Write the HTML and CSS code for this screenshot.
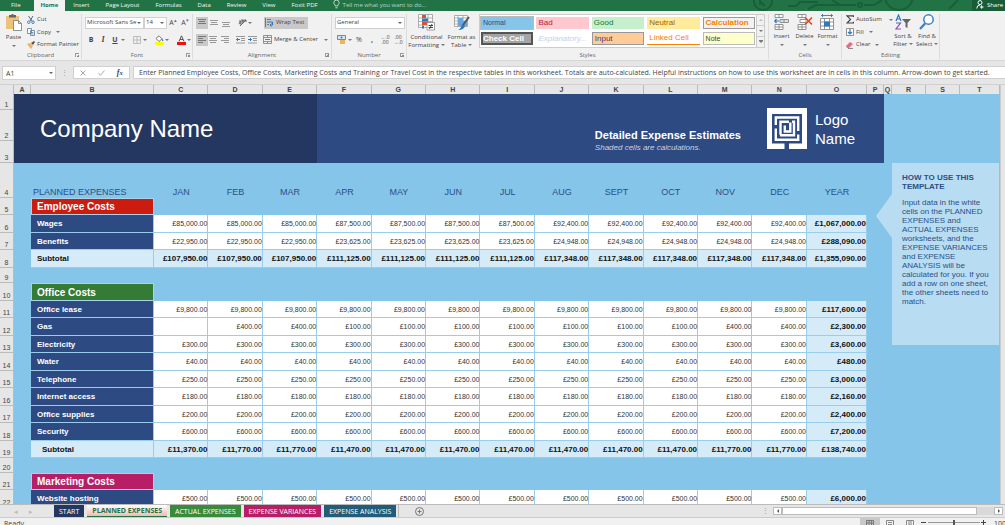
FILE: index.html
```
<!DOCTYPE html>
<html lang="en">
<head>
    <meta charset="UTF-8">
    <title>Planned Expenses</title>
    <link rel="stylesheet" href="styles.css">
</head>
<body>
<div class="app">
    <!-- ribbon tabs -->
    <nav class="tabs">
        <a href="#" class="tab tab-file">File</a>
        <a href="#" class="tab active">Home</a>
        <a href="#" class="tab">Insert</a>
        <a href="#" class="tab">Page Layout</a>
        <a href="#" class="tab">Formulas</a>
        <a href="#" class="tab">Data</a>
        <a href="#" class="tab">Review</a>
        <a href="#" class="tab">View</a>
        <a href="#" class="tab">Foxit PDF</a>
        <a href="#" class="tell-me">
            <svg width="7" height="9" viewBox="0 0 7 9" fill="none" stroke="#b9d6c5"><path d="M2.2 6V5Q.8 4 .8 2.8A2.6 2.6 0 0 1 6.2 2.8Q6.2 4 4.8 5V6zM2.4 7.8h2.2"/></svg>
            Tell me what you want to do...</a>
        <svg class="circuit" width="220" height="11" viewBox="0 0 220 11" fill="none" stroke="#1a5f39" stroke-width="2"><circle cx="11" cy="1" r="9"/><path d="M8-1v6M8 1l5 5M36 6h8l4-4h18M56 9l8-4h40M80 0l8 5M112 5h10l8-5M206 0l-9 9"/><circle cx="108" cy="5" r="2"/><circle cx="147" cy="-4" r="14"/></svg>
        <button class="share">
            <svg width="8" height="9" viewBox="0 0 8 9" fill="none" stroke="#fff"><circle cx="4" cy="2.6" r="2"/><path d="M.7 8.5Q1 5 4 5M4 7h3.5M5.7 5.3v3.4"/></svg>
            Share</button>
    </nav>

    <!-- ribbon -->
    <div class="ribbon">
        <section class="group clipboard">
            <div class="group-body">
                <button class="big paste">
                    <svg width="16" height="17" viewBox="0 0 16 17"><path fill="#edc27a" d="M0 2h13v13H0z"/><path fill="#666" d="M3 1h2q1.500-2 3 0h2v2.500H3z"/><path fill="#fff" stroke="#777" stroke-width=".8" d="M7.500 6.500h5l3 3v7h-8zM12.500 6.500v3h3"/></svg>
                    <span>Paste</span><i class="arrow"></i>
                </button>
                <div class="stack">
                    <button class="small"><svg width="8" height="8" viewBox="0 0 8 8" fill="none" stroke="#4a5a70" stroke-width=".9"><path d="M1.500 0L5 5M6 0L3 5"/><circle cx="1.800" cy="6.200" r="1.300" stroke="#2f78bd"/><circle cx="6" cy="6.200" r="1.300" stroke="#2f78bd"/></svg>Cut</button>
                    <button class="small"><svg width="8" height="8" viewBox="0 0 8 8" fill="#fff" stroke="#5b7899" stroke-width=".8"><path d="M.5.5h4v5h-4zM3.500 2.500h4v5h-4zM4.500 4.500h2M4.500 6h2"/></svg>Copy<i class="arrow"></i></button>
                    <button class="small"><svg width="8" height="8" viewBox="0 0 8 8"><path fill="#edb45c" d="M0 3l3-1 3 3-2 3z"/><path fill="#555" d="M4 2l3-2 1 1-2 3z"/></svg>Format Painter</button>
                </div>
            </div>
            <h2>Clipboard</h2><i class="launcher"></i>
        </section>

        <section class="group font">
            <div class="group-body rows">
                <div class="row">
                    <span class="combo font-name"><select aria-label="Font"><option>Microsoft Sans Se</option></select></span>
                    <span class="combo font-size"><select aria-label="Font size"><option>14</option></select></span>
                    <button class="tool letter">A<sup>▴</sup></button>
                    <button class="tool letter">A<sup>▾</sup></button>
                </div>
                <div class="row">
                    <button class="tool"><b>B</b></button>
                    <button class="tool"><i class="serif">I</i></button>
                    <button class="tool"><u><b>U</b></u></button>
                    <i class="arrow"></i>
                    <button class="tool split"><svg width="8" height="8" viewBox="0 0 8 8" fill="none" stroke="#bbb"><path d="M.5.5h7v7h-7zM4 0v8M0 4h8"/></svg></button>
                    <i class="arrow"></i>
                    <button class="tool split"><svg width="9" height="10" viewBox="0 0 9 10"><path fill="#fff" stroke="#555" stroke-width=".8" d="M1 3.500L4 .8l3 3-3 2.700z"/><path fill="#2f78bd" d="M7 3l1.500 3H7z"/><path fill="#ff0" d="M0 7h9v3H0z"/></svg></button>
                    <i class="arrow"></i>
                    <button class="tool split"><svg width="9" height="10" viewBox="0 0 9 10"><path fill="none" stroke="#555" d="M2 6.500L4.500.8 7 6.500M3 4.500h3"/><path fill="#e11" d="M0 7h9v3H0z"/></svg></button>
                    <i class="arrow"></i>
                </div>
            </div>
            <h2>Font</h2><i class="launcher"></i>
        </section>

        <section class="group alignment">
            <div class="group-body rows">
                <div class="row">
                    <button class="tool box on"><svg width="8" height="8" viewBox="0 0 8 8" stroke="#777"><path d="M0 .5h8M1 2.500h6M0 4.500h8"/></svg></button>
                    <button class="tool box"><svg width="8" height="8" viewBox="0 0 8 8" stroke="#999"><path d="M0 1.500h8M1 3.500h6M0 5.500h8"/></svg></button>
                    <button class="tool box"><svg width="8" height="8" viewBox="0 0 8 8" stroke="#999"><path d="M0 3.500h8M1 5.500h6M0 7.500h8"/></svg></button>
                    <button class="tool box apart"><svg width="9" height="9" viewBox="0 0 9 9" fill="none" stroke="#555" stroke-width=".9"><path d="M2 8l6-6M8 4V2H6M1 3q2-1 2 1v2M3 4Q1 4 1 5t2 1M4 1v3q2 1 2-1T4 3"/></svg></button>
                    <i class="arrow"></i>
                    <button class="wrap on"><svg width="9" height="9" viewBox="0 0 9 9" fill="none" stroke="#777"><path d="M.5 0v9M2 1.500h4M2 6.500h2"/><path stroke="#2f78bd" d="M2 4h5.500v3H5M6.500 5.500L5 7l1.500 1.500"/></svg>Wrap Text</button>
                </div>
                <div class="row">
                    <button class="tool box on"><svg width="8" height="8" viewBox="0 0 8 8" stroke="#777"><path d="M0 .5h8M0 2.500h5M0 4.500h8M0 6.500h5"/></svg></button>
                    <button class="tool box"><svg width="8" height="8" viewBox="0 0 8 8" stroke="#999"><path d="M0 .5h8M1 2.500h6M0 4.500h8M1 6.500h6"/></svg></button>
                    <button class="tool box"><svg width="8" height="8" viewBox="0 0 8 8" stroke="#999"><path d="M0 .5h8M3 2.500h5M0 4.500h8M3 6.500h5"/></svg></button>
                    <button class="tool box apart"><svg width="9" height="8" viewBox="0 0 9 8" fill="none" stroke="#999"><path d="M0 .5h9M5 2.500h4M5 4.500h4M0 7h9"/><path stroke="#2f78bd" d="M4 3.500H.5M2 2L.5 3.500 2 5"/></svg></button>
                    <button class="tool box"><svg width="9" height="8" viewBox="0 0 9 8" fill="none" stroke="#999"><path d="M0 .5h9M5 2.500h4M5 4.500h4M0 7h9"/><path stroke="#2f78bd" d="M0 3.500h3.500M2 2l1.500 1.500L2 5"/></svg></button>
                    <button class="wrap"><svg width="9" height="9" viewBox="0 0 9 9" fill="none" stroke="#888" stroke-width=".9"><path d="M.5.5h8v8h-8zM.5 2.500h8M.5 6.500h8M4.500 0v2.500M4.500 6.500V9"/><path stroke="#2f78bd" d="M2 4.500h5"/></svg>Merge &amp; Center<i class="arrow"></i></button>
                </div>
            </div>
            <h2>Alignment</h2><i class="launcher"></i>
        </section>

        <section class="group number">
            <div class="group-body rows">
                <div class="row"><span class="combo number-format"><select aria-label="Number format"><option>General</option></select></span></div>
                <div class="row">
                    <button class="tool"><svg width="9" height="9" viewBox="0 0 9 9"><path fill="#d6e6f5" stroke="#2f78bd" stroke-width=".8" d="M.5.5h8v4h-8z"/><circle cx="4.500" cy="2.500" r="1" fill="#2f78bd"/><path fill="#edb45c" d="M3 5h5v4H3z"/></svg></button>
                    <i class="arrow"></i>
                    <button class="tool">%</button>
                    <button class="tool"><b>,</b></button>
                    <button class="tool dec"><span class="blue">←</span>.0<br>.00</button>
                    <button class="tool dec">.00<br><span class="blue">→</span>.0</button>
                </div>
            </div>
            <h2>Number</h2><i class="launcher"></i>
        </section>

        <section class="group styles">
            <div class="group-body">
                <button class="big">
                    <svg width="17" height="17" viewBox="0 0 17 17"><path fill="#fff" stroke="#999" stroke-width=".8" d="M.5.5h14v13H.5zM.5 4h14M.5 7.500h14M.5 11h14M10 .5v13"/><path fill="#d9532c" d="M4 1h4v3H4zM4 8h5v3H4z"/><path fill="#2f78bd" d="M4 4.500h6v3H4zM4 11.500h2v3H4z"/><path fill="#fff" stroke="#888" stroke-width=".8" d="M9 8.500h7.500v7.500H9z"/><path stroke="#444" d="M10.500 11.500h4.500M10.500 13.500h4.500M14 10l-2.500 5"/></svg>
                    <span>Conditional<br>Formatting <i class="arrow"></i></span>
                </button>
                <button class="big">
                    <svg width="17" height="17" viewBox="0 0 17 17"><path fill="#fff" stroke="#999" stroke-width=".8" d="M1.500 1.500h13v11h-13zM1.500 4h13M1.500 7h13M1.500 10h13M5 1.500v11M10 1.500v11"/><path fill="#6ba6d9" d="M5 4h5v3H5zM10 7h4v5h-4zM5 7h5v5H5z"/><path stroke="#555" stroke-width="2" d="M16 3l-6 8"/><path fill="#2f78bd" d="M9 10l3 2q-1 4-7 4 3-1 4-6z"/></svg>
                    <span>Format as<br>Table <i class="arrow"></i></span>
                </button>
                <div class="gallery">
                    <div class="swatches">
                        <button class="style normal">Normal</button>
                        <button class="style bad">Bad</button>
                        <button class="style good">Good</button>
                        <button class="style neutral">Neutral</button>
                        <button class="style calculation">Calculation</button>
                        <button class="style check">Check Cell</button>
                        <button class="style explanatory">Explanatory...</button>
                        <button class="style input">Input</button>
                        <button class="style linked">Linked Cell</button>
                        <button class="style note">Note</button>
                    </div>
                    <div class="gallery-nav">
                        <button aria-label="Up"><i class="arrow up"></i></button>
                        <button aria-label="Down"><i class="arrow"></i></button>
                        <button aria-label="More"><i class="arrow more"></i></button>
                    </div>
                </div>
            </div>
            <h2>Styles</h2>
        </section>

        <section class="group cells">
            <div class="group-body">
                <button class="big">
                    <svg width="15" height="16" viewBox="0 0 15 16" fill="#fff" stroke="#888" stroke-width=".9"><path d="M1 .5h8v3H1zM5 .5v3M1 10.500h8v5H1zM5 10.500v5M1 13h8"/><path fill="#cfe2f3" d="M6 5.500h8.500v3H6zM10 5.500v3"/><path fill="none" stroke="#2f78bd" stroke-width="1.200" d="M5 7H.8M2.500 5L.8 7l1.700 2"/></svg>
                    <span>Insert</span><i class="arrow"></i>
                </button>
                <button class="big">
                    <svg width="16" height="16" viewBox="0 0 16 16" fill="#fff" stroke="#888" stroke-width=".9"><path d="M1 .5h8v3H1zM5 .5v3M1 10.500h8v5H1zM5 10.500v5M1 13h8M3 5.500h6v3H3z"/><path fill="none" stroke="#dc4a26" stroke-width="1.600" d="M8 3.500l7 7M15 3.500l-7 7"/></svg>
                    <span>Delete</span><i class="arrow"></i>
                </button>
                <button class="big">
                    <svg width="15" height="16" viewBox="0 0 15 16" fill="#fff" stroke="#888" stroke-width=".9"><path d="M.5 4.500h13v11H.5zM.5 8h13M.5 12h13M4.500 4.500v11M9.500 4.500v11"/><path fill="#2f78bd" stroke="none" d="M4 7.500h6v5H4z"/><path fill="none" stroke="#2f78bd" d="M1 1.500h12M2.500 0v3M11.500 0v3"/></svg>
                    <span>Format</span><i class="arrow"></i>
                </button>
            </div>
            <h2>Cells</h2>
        </section>

        <section class="group editing">
            <div class="group-body">
                <div class="stack">
                    <button class="small"><svg width="8" height="9" viewBox="0 0 8 9" fill="none" stroke="#444" stroke-width="1.200"><path d="M7.400 2V.8H1L4.500 4.400 1 8h6.400V6.800"/></svg>AutoSum<i class="arrow far"></i></button>
                    <button class="small"><svg width="8" height="8" viewBox="0 0 8 8" fill="#fff" stroke="#777" stroke-width=".8"><path d="M.5.5h7v7h-7z"/><path fill="none" stroke="#2f78bd" stroke-width="1.200" d="M4 1v5M2 4l2 2 2-2"/></svg>Fill<i class="arrow"></i></button>
                    <button class="small"><svg width="8" height="8" viewBox="0 0 8 8"><path fill="#e36c86" d="M0 5l4-4 3 2-4 4H1z"/><path stroke="#888" d="M2 7.500h5"/></svg>Clear<i class="arrow"></i></button>
                </div>
                <button class="big">
                    <svg width="16" height="16" viewBox="0 0 16 16" fill="none" stroke-width="1.200"><path stroke="#2f78bd" d="M1 7l2.500-6L6 7M2 5h3"/><path stroke="#8a4fa8" d="M1 9h4.500L1 15h5"/><path fill="#666" d="M7 5h9l-3.500 4v5l-2-1V9z"/></svg>
                    <span>Sort &amp;<br>Filter <i class="arrow"></i></span>
                </button>
                <button class="big">
                    <svg width="16" height="16" viewBox="0 0 16 16" fill="#fff" stroke="#3b7fc0" stroke-width="1.500"><circle cx="9.500" cy="5.500" r="4.700"/><path stroke-width="2.200" d="M6 9.500L1 15"/></svg>
                    <span>Find &amp;<br>Select <i class="arrow"></i></span>
                </button>
            </div>
            <h2>Editing</h2>
        </section>
    </div>

    <!-- formula bar -->
    <div class="formula-bar">
        <span class="combo name-box"><select aria-label="Name box"><option>A1</option></select></span>
        <span class="dots">⋮</span>
        <div class="fx">
            <button aria-label="Cancel"><svg width="6" height="6" viewBox="0 0 6 6" stroke="#aaa"><path d="M.5.5l5 5M5.500.5l-5 5"/></svg></button>
            <button aria-label="Enter"><svg width="7" height="6" viewBox="0 0 7 6" fill="none" stroke="#aaa"><path d="M.5 3l2 2.300L6.500.5"/></svg></button>
            <button><i class="serif">f<small>x</small></i></button>
        </div>
        <input class="formula" type="text" aria-label="Formula" value="Enter Planned Employee Costs, Office Costs, Marketing Costs and Training or Travel Cost in the respective tables in this worksheet. Totals are auto-calculated. Helpful instructions on how to use this worksheet are in cells in this column. Arrow-down to get started.">
    </div>

    <!-- worksheet -->
    <div class="sheet">
        <table class="grid">
            <colgroup>
                <col class="c-num"><col class="c-a"><col class="c-b">
                <col span="12">
                <col class="c-o"><col class="c-p"><col class="c-q"><col class="c-r"><col class="c-r"><col class="c-t">
            </colgroup>
            <thead><tr id="letters"></tr></thead>
            <tbody id="rows">
                <tr class="r1">
                    <th>1</th>
                    <td class="company" colspan="5" rowspan="3">Company Name</td>
                    <td class="banner" colspan="11" rowspan="3">
                        <div class="banner-body">
                            <div class="banner-title"><h1>Detailed Expense Estimates</h1><p>Shaded cells are calculations.</p></div>
                            <svg class="logo" width="40" height="41" viewBox="0 0 40 41"><path fill="#fff" d="M0 0h40v41H0z"/><path fill="#2d4a82" d="M5 6h30v29.500H5zM17.500 35h4.500v6h-4.500z"/><g fill="none" stroke="#fff" stroke-width="2.400"><path d="M8.800 17V9.500h22.400V23M31.200 26.500v5.300H8.800V20.500M13.500 26.800V13.800H22M25 13.800h2v13.500H13M17.800 17.500v6h5.500v-9"/></g></svg>
                            <div class="logo-name">Logo<br>Name</div>
                        </div>
                    </td>
                    <td colspan="4" rowspan="3"></td>
                </tr>
                <tr class="r2"><th>2</th></tr>
                <tr class="r3"><th>3</th></tr>
            </tbody>
        </table>
        <aside class="how-to">
            <h3>HOW TO USE THIS TEMPLATE</h3>
            <p>Input data in the white cells on the PLANNED EXPENSES and ACTUAL EXPENSES worksheets, and the EXPENSE VARIANCES and EXPENSE ANALYSIS will be calculated for you. If you add a row on one sheet, the other sheets need to match.</p>
        </aside>
        <div class="v-scroll"></div>
    </div>

    <!-- sheet tabs -->
    <div class="sheet-bar">
        <button class="nav">◂</button>
        <button class="nav">▸</button>
        <div class="sheet-tabs">
            <button class="sheet-tab start">START</button>
            <button class="sheet-tab current">PLANNED EXPENSES</button>
            <button class="sheet-tab actual">ACTUAL EXPENSES</button>
            <button class="sheet-tab variances">EXPENSE VARIANCES</button>
            <button class="sheet-tab analysis">EXPENSE ANALYSIS</button>
        </div>
        <button class="add" aria-label="New sheet"><svg width="9" height="9" viewBox="0 0 9 9" fill="none" stroke="#777"><circle cx="4.500" cy="4.500" r="4"/><path d="M4.500 2.500v4M2.500 4.500h4"/></svg></button>
        <span class="dots">⋮</span>
        <div class="h-scroll">
            <button aria-label="Scroll left"><i class="arrow left"></i></button>
            <div class="track"><div class="thumb"></div></div>
            <button aria-label="Scroll right"><i class="arrow right"></i></button>
        </div>
    </div>

    <!-- status bar -->
    <div class="status">
        <span class="ready">Ready</span>
        <button class="view on" aria-label="Normal view"><svg width="8" height="8" viewBox="0 0 8 8" fill="none" stroke="#777"><path d="M.5.5h7v7h-7zM0 3h8M0 5.500h8M3 0v8M5.500 0v8"/></svg></button>
        <button class="view" aria-label="Page layout"><svg width="8" height="8" viewBox="0 0 8 8" fill="none" stroke="#888"><path d="M.5.5h7v7h-7zM2 2.500h4M2 4.500h4"/></svg></button>
        <button class="view" aria-label="Page break"><svg width="8" height="8" viewBox="0 0 8 8" fill="none" stroke="#888"><path d="M.5.5h7v7h-7zM3 0v5h2V0"/></svg></button>
        <button class="sign" aria-label="Zoom out"><svg width="5" height="5" viewBox="0 0 5 5" stroke="#444"><path d="M0 2.500h5"/></svg></button>
        <input class="zoom" type="range" aria-label="Zoom" value="50">
        <button class="sign" aria-label="Zoom in"><svg width="5" height="5" viewBox="0 0 5 5" stroke="#444"><path d="M0 2.500h5M2.500 0v5"/></svg></button>
        <span class="percent">100%</span>
    </div>
</div>
<script src="script.js"></script>
</body>
</html>
```
FILE: styles.css
```
* {
    box-sizing: border-box;
}
body, h1, h2, h3, p {
    margin: 0;
}
body {
    font-family: "Open Sans", "Noto Sans", sans-serif;
    font-size: 7px;
    line-height: 9px;
    color: #444;
    overflow: hidden;
}
a {
    color: inherit;
    text-decoration: none;
}
button, select, input {
    font: inherit;
    color: inherit;
    border: 0;
    margin: 0;
    padding: 0;
    background: none;
}
button {
    white-space: nowrap;
}
svg {
    display: block;
    flex: none;
}
.app {
    height: 100vh;
    display: flex;
    flex-direction: column;
    background: #e6e6e6;
}
.serif {
    font-family: "Liberation Serif", serif;
    font-weight: bold;
    font-size: 8px;
}
.arrow {
    display: inline-block;
    flex: none;
    border: 2px solid transparent;
    border-top-color: #777;
    border-bottom: 0;
    vertical-align: middle;
}
.arrow.up {
    border-top: 0;
    border-bottom: 2px solid #bbb;
}
.arrow.left {
    border: 2px solid transparent;
    border-right-color: #555;
    border-left: 0;
}
.arrow.right {
    border: 2px solid transparent;
    border-left-color: #555;
    border-right: 0;
}

/* ribbon tabs */
.tabs {
    display: flex;
    flex: none;
    height: 11px;
    font-size: 6px;
    line-height: 10px;
    background: #217346;
    color: #f0f7f3;
    overflow: hidden;
    white-space: nowrap;
}
.tab {
    padding: 0 8px;
}
.tab-file {
    padding: 0 13px 0 11px;
}
.tab.active {
    background: #f1f1f1;
    color: #217346;
    font-weight: bold;
    padding: 0 7px;
}
.tell-me {
    display: flex;
    gap: 3px;
    padding: 0 7px;
    color: #b9d6c5;
}
.circuit {
    margin-left: auto;
}
.share {
    display: flex;
    gap: 3px;
    padding: 0 2px 0 4px;
    background: #185c37;
    color: #fff;
}

/* ribbon */
.ribbon {
    display: flex;
    flex: none;
    height: 50px;
    font-size: 6px;
    background: #f1f1f1;
    border-bottom: 1px solid #d5d5d5;
}
.group {
    position: relative;
    flex: none;
    display: flex;
    flex-direction: column;
    justify-content: space-between;
    margin: 3px 0 1px;
    border-right: 1px solid #dcdcdc;
}
.group h2 {
    font-size: 6px;
    font-weight: normal;
    line-height: 8px;
    text-align: center;
    color: #666;
}
.launcher {
    position: absolute;
    right: 2px;
    bottom: 2px;
    width: 4px;
    height: 4px;
    border: 1px solid #999;
    border-width: 1px 0 0 1px;
    background: linear-gradient(135deg, transparent 50%, #888 50%);
}
.group-body {
    display: flex;
    height: 36px;
}
.clipboard { width: 82px; }
.font { width: 111px; }
.alignment { width: 139px; }
.number { width: 75px; }
.styles { width: 362px; }
.cells { width: 73px; }
.editing { width: 98px; }
.big {
    display: flex;
    flex-direction: column;
    align-items: center;
    gap: 2px;
    line-height: 8px;
}
.big > .arrow {
    margin-top: 2px;
}
.paste {
    width: 27px;
}
.stack {
    display: flex;
    flex-direction: column;
    justify-content: space-between;
}
.small {
    display: flex;
    align-items: center;
    gap: 2px;
    height: 11px;
}
.small .arrow {
    margin-left: 3px;
}
.small .arrow.far {
    margin-left: 5px;
}
.rows {
    flex-direction: column;
    gap: 4px;
    padding: 2px 0 0 3px;
}
.row {
    display: flex;
    align-items: center;
    height: 13px;
}
.combo {
    position: relative;
    display: flex;
    height: 12px;
    background: #fff;
    border: 1px solid #d0d0d0;
}
.combo select {
    appearance: none;
    width: 100%;
    padding-left: 1px;
}
.combo::after {
    content: "";
    position: absolute;
    right: 2px;
    top: 4px;
    border: 2px solid transparent;
    border-top-color: #666;
    border-bottom: 0;
}
.font-name { width: 59px; }
.font-size { width: 23px; }
.number-format { width: 70px; }
.tool {
    display: flex;
    align-items: center;
    justify-content: center;
    width: 12px;
    height: 13px;
    font-size: 7px;
}
.letter sup {
    font-size: 5px;
    color: #2f78bd;
    align-self: flex-start;
}
.split {
    margin-left: 6px;
}
.box {
    height: 12px;
}
.apart {
    margin-left: 4px;
}
.on {
    background: #c8c8c8;
}
.wrap {
    display: flex;
    align-items: center;
    gap: 2px;
    height: 12px;
    padding: 0 3px 0 1px;
    margin-left: 4px;
}
.wrap.on {
    margin-left: 12px;
}
.wrap .arrow {
    margin-left: 4px;
}
.number .row {
    gap: 1px;
}
.dec {
    display: block;
    font-size: 5px;
    line-height: 5px;
}
.blue {
    color: #2f78bd;
}
.styles .group-body {
    padding-left: 2px;
}
.styles .big {
    width: 35px;
}
.gallery {
    display: flex;
    flex: 1;
    height: 34px;
    margin-right: 3px;
    border: 1px solid #ccc;
    background: #fff;
}
.swatches {
    flex: 1;
    display: grid;
    grid-template-columns: repeat(5, 1fr);
    gap: 3px;
    padding: 2px 1px;
}
.style {
    font-family: "Liberation Sans", sans-serif;
    font-size: 8px;
    text-align: left;
    padding-left: 2px;
    overflow: hidden;
}
.style.normal {
    background: #84c5e9;
    outline: 1px solid #bbb;
    font-size: 7px;
    color: #2d4a82;
}
.style.bad { background: #ffc7ce; color: #c0202a; }
.style.good { background: #c6efce; color: #1a7a2a; }
.style.neutral { background: #ffeb9c; color: #9c6500; }
.style.calculation { background: #f2f2f2; border: 1px solid #999; color: #fa7d00; font-weight: bold; }
.style.check { background: #a5a5a5; border: 2px solid #555; color: #fff; font-weight: bold; padding: 0; }
.style.explanatory { color: #c3cfe6; font-style: italic; }
.style.input { background: #ffcc99; border: 1px solid #999; color: #3f3f76; }
.style.linked { color: #fa7d00; border-bottom: 1px solid #ff8001; }
.style.note { background: #ffffcc; border: 1px solid #bbb; font-size: 7px; }
.gallery-nav {
    display: flex;
    flex-direction: column;
    width: 8px;
    border-left: 1px solid #ccc;
}
.gallery-nav button {
    flex: 1;
    display: flex;
    align-items: center;
    justify-content: center;
    background: #f1f1f1;
}
.gallery-nav button + button {
    border-top: 1px solid #ccc;
}
.arrow.more {
    box-shadow: 0 -1px #777;
}
.cells .group-body {
    padding-left: 1px;
}
.cells .big {
    width: 23px;
}
.editing .group-body {
    padding-left: 4px;
}
.editing .stack {
    width: 45px;
}
.editing .big {
    width: 24px;
}

/* formula bar */
.formula-bar {
    display: flex;
    flex: none;
    height: 24px;
    padding: 5px 0;
    border-bottom: 1px solid #d0d0d0;
}
.name-box {
    width: 54px;
    height: 14px;
    margin-left: 2px;
}
.name-box select {
    padding-left: 3px;
}
.name-box::after {
    top: 5px;
}
.dots {
    width: 17px;
    line-height: 14px;
    text-align: center;
    color: #999;
}
.fx {
    display: flex;
    width: 57px;
    background: #fff;
    border: 1px solid #d0d0d0;
}
.fx button {
    flex: 1;
    display: flex;
    align-items: center;
    justify-content: center;
}
.formula {
    flex: 1;
    min-width: 0;
    margin-left: 3px;
    padding-left: 5px;
    background: #fff;
    border: 1px solid #d0d0d0;
    border-right: 0;
}

/* worksheet */
.sheet {
    position: relative;
    flex: 1;
    display: flex;
    align-items: flex-start;
    min-height: 0;
    overflow: hidden;
    background: #84c5e9;
    font-family: "Liberation Sans", Arial, sans-serif;
}
.grid {
    flex: 1;
    table-layout: fixed;
    border-collapse: separate;
    border-spacing: 0;
    width: 0;
}
.v-scroll {
    width: 5px;
    align-self: stretch;
    background: #e6e6e6;
    border-left: 1px solid #ccc;
}
.c-num { width: 14px; }
.c-a { width: 17px; }
.c-b { width: 123px; }
.c-o { width: 60px; }
.c-p { width: 17px; }
.c-q { width: 8px; }
.c-r { width: 34px; }
.c-t { width: 40px; }
.grid th, .grid td {
    padding: 0;
    line-height: 9px;
}
.grid thead th {
    height: 9px;
    font-size: 7px;
    background: #e6e6e6;
    border-right: 1px solid #bbb;
}
.grid tbody th:first-child {
    font-size: 7px;
    font-weight: normal;
    vertical-align: bottom;
    background: #e6e6e6;
    border-right: 1px solid #bbb;
    border-bottom: 1px solid #bbb;
    line-height: 8px;
}
.grid tr { height: 17px; }
.grid tr:nth-child(even) { height: 18px; }
.grid thead tr { height: 9px; }
.grid tr.r1 { height: 16px; }
.grid tr.r2 { height: 31px; }
.grid tr.r3 { height: 22px; }
.grid tr.months { height: 35px; }
.grid tr.gap { height: 15px; }
.grid .company {
    padding-left: 26px;
    background: #243761;
    color: #fff;
    font-size: 24px;
    line-height: 28px;
}
.grid .banner {
    background: #2d4a82;
    color: #fff;
}
.banner-body {
    display: flex;
    justify-content: flex-end;
    align-items: center;
    padding-right: 29px;
}
.banner-title {
    margin: 24px 26px 0 0;
}
.banner-title h1 {
    font-size: 11px;
    line-height: 14px;
}
.banner-title p {
    font-size: 8px;
    line-height: 11px;
    font-style: italic;
    color: #c9d4e8;
}
.logo-name {
    margin-left: 8px;
    font-size: 15px;
    line-height: 19px;
}
.grid .months td {
    vertical-align: bottom;
    padding-bottom: 1px;
    text-align: center;
    font-size: 9px;
    color: #2c4f86;
}
.grid .months .title {
    padding-left: 2px;
    text-align: left;
}
.grid .section {
    padding-left: 5px;
    border: 1px solid #a9d3ea;
    text-align: left;
    font-size: 10px;
    color: #fff;
}
.section.red { background: #cc1c10; }
.section.green { background: #347b36; }
.section.pink { background: #b81e66; }
.grid .label {
    padding-left: 6px;
    text-align: left;
    font-size: 8px;
    color: #fff;
    background: #2d4a82;
    border-right: 1px solid #98cdec;
    border-bottom: 1px solid #98cdec;
}
.grid .cell {
    text-align: right;
    font-size: 7px;
    color: #333;
    background: #fff;
    border-right: 1px solid #98cdec;
    border-bottom: 1px solid #98cdec;
}
.grid .year, .grid .subtotal .cell {
    font-size: 8px;
    font-weight: bold;
    color: #111;
    background: #d5ebf8;
}
.grid .subtotal .label {
    color: #111;
    background: #d5ebf8;
}
.grid .subtotal .indent {
    padding-left: 11px;
}

/* help callout floating over columns Q to T */
.how-to {
    position: absolute;
    right: 6px;
    top: 78px;
    width: 107px;
    height: 182px;
    padding: 10px 8px 0 10px;
    background: #b8ddf2;
    color: #2c4f86;
    font-size: 8px;
}
.how-to::before {
    content: "";
    position: absolute;
    right: 100%;
    top: 31px;
    border: 22px solid transparent;
    border-right: 16px solid #b8ddf2;
    border-left: 0;
}
.how-to h3 {
    font-size: 8px;
    margin-bottom: 7px;
}

/* sheet tabs */
.sheet-bar {
    display: flex;
    flex: none;
    align-items: center;
    height: 14px;
    border-top: 1px solid #bbb;
    border-bottom: 1px solid #ccc;
}
.nav {
    width: 15px;
    color: #bbb;
}
.nav:first-child {
    margin-left: 8px;
}
.sheet-tabs {
    display: flex;
    gap: 3px;
    margin-left: 16px;
    padding-right: 2px;
    border-right: 1px solid #bbb;
}
.sheet-tab {
    height: 12px;
    padding: 0 5px;
    color: #fff;
}
.sheet-tab.start { background: #243761; }
.sheet-tab.current {
    color: #217346;
    font-weight: bold;
    background: linear-gradient(#fff, #f3b9b0);
    border-bottom: 1px solid #217346;
}
.sheet-tab.actual { background: #388a3c; }
.sheet-tab.variances { background: #b81e66; }
.sheet-tab.analysis { background: #235c79; }
.add {
    margin-left: 16px;
}
.sheet-bar .dots {
    margin-left: auto;
    width: 16px;
    line-height: 12px;
}
.h-scroll {
    display: flex;
    width: 230px;
    height: 8px;
    margin-right: 2px;
}
.h-scroll button {
    display: flex;
    align-items: center;
    justify-content: center;
    width: 9px;
    background: #fff;
    border: 1px solid #bbb;
}
.track {
    flex: 1;
    background: #d9d9d9;
}
.thumb {
    width: 92%;
    height: 8px;
    background: #fff;
    border: 1px solid #bbb;
}

/* status bar */
.status {
    display: flex;
    flex: none;
    height: 7px;
    overflow: hidden;
    background: #f1f1f1;
}
.ready {
    margin: 1px auto 0 4px;
}
.view {
    display: flex;
    justify-content: center;
    width: 20px;
    height: 12px;
    padding-top: 2px;
}
.sign {
    width: 8px;
    height: 7px;
    padding: 2px 1px 0;
}
.zoom {
    appearance: none;
    width: 52px;
    height: 10px;
    background: linear-gradient(#999, #999) 0 4px / 100% 1px no-repeat;
}
.zoom::-webkit-slider-thumb {
    appearance: none;
    width: 2px;
    height: 7px;
    background: #555;
}
.percent {
    width: 11px;
    margin: 1px 0 0 6px;
}
```
FILE: script.js
```
// column letters
var letters = ['', 'A', 'B', 'C', 'D', 'E', 'F', 'G', 'H', 'I', 'J', 'K', 'L', 'M', 'N', 'O', 'P', 'Q', 'R', 'S', 'T'];
document.getElementById('letters').innerHTML = letters.map(function (l) {
  return '<th>' + l + '</th>';
}).join('');

// same value in several months
function fill(value, count) {
  var list = [];
  for (var i = 0; i < count; i++) list.push(value);
  return list;
}

function money(n) {
  return n === null ? '' : '£' + n.toLocaleString('en-GB', { minimumFractionDigits: 2 });
}

function sum(list) {
  return list.reduce(function (a, b) { return a + b; }, 0);
}

var months = ['JAN', 'FEB', 'MAR', 'APR', 'MAY', 'JUN', 'JUL', 'AUG', 'SEPT', 'OCT', 'NOV', 'DEC', 'YEAR'];
var sections = [
  { title: 'Employee Costs', color: 'red', items: [
    ['Wages', fill(85000, 3).concat(fill(87500, 4), fill(92400, 5))],
    ['Benefits', fill(22950, 3).concat(fill(23625, 4), fill(24948, 5))]
  ] },
  { title: 'Office Costs', color: 'green', indent: true, items: [
    ['Office lease', fill(9800, 12)],
    ['Gas', [null].concat(fill(400, 2), fill(100, 7), fill(400, 2))],
    ['Electricity', fill(300, 12)],
    ['Water', fill(40, 12)],
    ['Telephone', fill(250, 12)],
    ['Internet access', fill(180, 12)],
    ['Office supplies', fill(200, 12)],
    ['Security', fill(600, 12)]
  ] },
  { title: 'Marketing Costs', color: 'pink', open: true, items: [
    ['Website hosting', fill(500, 12)]
  ] }
];

var number = 4;
var html = '';

function row(cls, cells) {
  html += '<tr class="' + cls + '"><th>' + number + '</th><td></td>' + cells + '</tr>';
  number++;
}

function line(cls, label, values, indent) {
  var cells = '<th class="label' + (indent ? ' indent' : '') + '">' + label + '</th>';
  values.forEach(function (v) {
    cells += '<td class="cell">' + money(v) + '</td>';
  });
  row(cls, cells + '<td class="cell year">' + money(sum(values)) + '</td>');
}

row('months', '<td class="title">PLANNED EXPENSES</td>' + months.map(function (m) {
  return '<td>' + m + '</td>';
}).join(''));

sections.forEach(function (s) {
  row('', '<th class="section ' + s.color + '">' + s.title + '</th>');
  s.items.forEach(function (item) {
    line('', item[0], item[1]);
  });
  if (s.open) return;
  // column totals
  var totals = s.items[0][1].map(function (v, i) {
    return sum(s.items.map(function (item) { return item[1][i]; }));
  });
  line('subtotal', 'Subtotal', totals, s.indent);
  row('gap', '');
});

document.getElementById('rows').insertAdjacentHTML('beforeend', html);
```
